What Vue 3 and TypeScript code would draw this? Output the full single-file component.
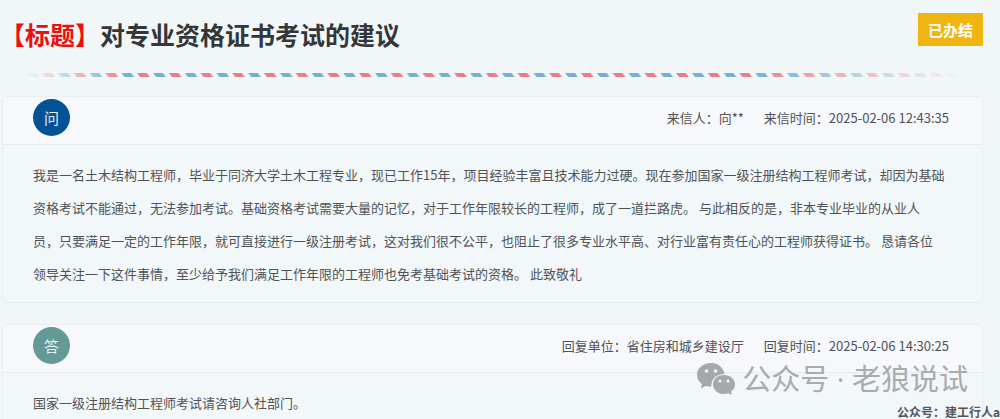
<script setup lang="ts">
interface Meta {
  label: string
  value: string
}

interface Entry {
  kind: 'ask' | 'reply'
  mark: string
  meta: Meta[]
  lines: string[]
}

const status = '已办结'
const title = '对专业资格证书考试的建议'

const entries: Entry[] = [
  {
    kind: 'ask',
    mark: '问',
    meta: [
      { label: '来信人：', value: '向**' },
      { label: '来信时间：', value: '2025-02-06 12:43:35' },
    ],
    lines: [
      '我是一名土木结构工程师，毕业于同济大学土木工程专业，现已工作15年，项目经验丰富且技术能力过硬。现在参加国家一级注册结构工程师考试，却因为基础',
      '资格考试不能通过，无法参加考试。基础资格考试需要大量的记忆，对于工作年限较长的工程师，成了一道拦路虎。 与此相反的是，非本专业毕业的从业人',
      '员，只要满足一定的工作年限，就可直接进行一级注册考试，这对我们很不公平，也阻止了很多专业水平高、对行业富有责任心的工程师获得证书。 恳请各位',
      '领导关注一下这件事情，至少给予我们满足工作年限的工程师也免考基础考试的资格。 此致敬礼',
    ],
  },
  {
    kind: 'reply',
    mark: '答',
    meta: [
      { label: '回复单位：', value: '省住房和城乡建设厅' },
      { label: '回复时间：', value: '2025-02-06 14:30:25' },
    ],
    lines: ['国家一级注册结构工程师考试请咨询人社部门。'],
  },
]
</script>

<template>
  <main class="page">
    <header class="top">
      <h1 class="title"><span class="tag">【标题】</span>{{ title }}</h1>
      <span class="status">{{ status }}</span>
    </header>

    <div class="content">
      <svg class="airmail" viewBox="0 0 2940 12" preserveAspectRatio="none" aria-hidden="true">
        <defs>
          <pattern id="dashes" x="25" y="0" width="95" height="12" patternUnits="userSpaceOnUse">
            <path d="M0 0H29L38 12H9Z" fill="#e87f88" />
            <path d="M48 0H77L86 12H57Z" fill="#77add6" />
          </pattern>
        </defs>
        <rect width="2940" height="12" fill="url(#dashes)" />
      </svg>

      <section v-for="entry in entries" :key="entry.kind" class="card">
        <div class="card-head">
          <span class="mark" :class="entry.kind">{{ entry.mark }}</span>
          <div class="meta">
            <span v-for="item in entry.meta" :key="item.label">{{ item.label }}{{ item.value }}</span>
          </div>
        </div>
        <p class="card-body">
          <span v-for="line in entry.lines" :key="line" class="line">{{ line }}</span>
        </p>
      </section>
    </div>

    <div class="watermark">
      <svg class="bubbles" viewBox="0 0 38 32" aria-hidden="true">
        <path
          d="M14 0C6 0 0 5.300 0 12c0 3.800 2 7 5 9.200L3.700 25.500 8.600 23c1.700.5 3.500.8 5.600.8C14 16 19.500 11 27.500 11 26.500 4.500 21 0 14 0Z"
          fill="#a6a8aa"
        />
        <path
          d="M27 12c-6.300 0-11 4.200-11 9.400S20.700 31 27 31c1.500 0 2.900-.2 4.200-.7L35 32l-1-3.500c2.500-1.800 4-4.300 4-7.100C38 16.200 33.300 12 27 12Z"
          fill="#a6a8aa"
        />
        <g fill="#f4f7f9">
          <circle cx="9.500" cy="8" r="1.800" />
          <circle cx="18.500" cy="8" r="1.800" />
          <circle cx="23" cy="18" r="1.500" />
          <circle cx="31" cy="18" r="1.500" />
        </g>
      </svg>
      <span>公众号 · 老狼说试</span>
    </div>
    <div class="credit">公众号：建工行人a</div>
  </main>
</template>

<style>
body {
  margin: 0;
  background: #f1f7f8;
}
</style>

<style scoped>
.page {
  position: relative;
  box-sizing: border-box;
  height: 100vh;
  overflow: hidden;
  padding: 13px 17px 0 0;
  background: #f1f7f8;
  color: #505356;
  font-family: 'Noto Sans CJK SC', sans-serif;
  font-size: 13px;
}

.top {
  display: flex;
  align-items: flex-start;
  justify-content: space-between;
}

.title {
  margin: 0;
  color: #343638;
  font-size: 25px;
  font-weight: 700;
  line-height: 42px;
}

.tag {
  color: #ee0f0f;
}

.status {
  padding: 0 10px;
  background: #f1b512;
  color: #fff;
  font-size: 15px;
  font-weight: 700;
  line-height: 33px;
}

.content {
  padding-left: 2px;
}

.airmail {
  display: block;
  width: 100%;
  height: 4px;
  margin: 18px 0 19px;
  mask-image: linear-gradient(to right, transparent 2%, #000 13%, #000 76%, transparent 98%);
}

.card {
  margin-bottom: 21px;
  border: 1px solid #e9eef2;
  border-radius: 4px;
  background: #f2f7f9;
}

.card-head {
  display: flex;
  align-items: center;
  justify-content: space-between;
  padding: 2px 33px 8px 30px;
  border-bottom: 1px solid #e6ebef;
  background: #f6f8fc;
}

.mark {
  width: 37px;
  border-radius: 50%;
  color: #e4eef5;
  font-size: 15px;
  line-height: 37px;
  text-align: center;
}

.ask {
  background: #045296;
}

.reply {
  background: #649a95;
}

.meta {
  display: flex;
  gap: 20px;
}

.card-body {
  margin: 0;
  padding: 13px 30px 12px;
  line-height: 33px;
}

.line {
  display: block;
}

.watermark {
  position: absolute;
  right: 32px;
  bottom: 20px;
  display: flex;
  align-items: center;
  gap: 7px;
  color: #a9abad;
  font-family: 'Open Sans', 'Noto Sans CJK SC', sans-serif;
  font-size: 29px;
  line-height: 40px;
}

.bubbles {
  width: 38px;
  height: 32px;
}

.credit {
  position: absolute;
  right: 0;
  bottom: 0;
  color: #55585a;
  font-size: 12px;
  font-weight: 700;
  line-height: 14px;
}
</style>
